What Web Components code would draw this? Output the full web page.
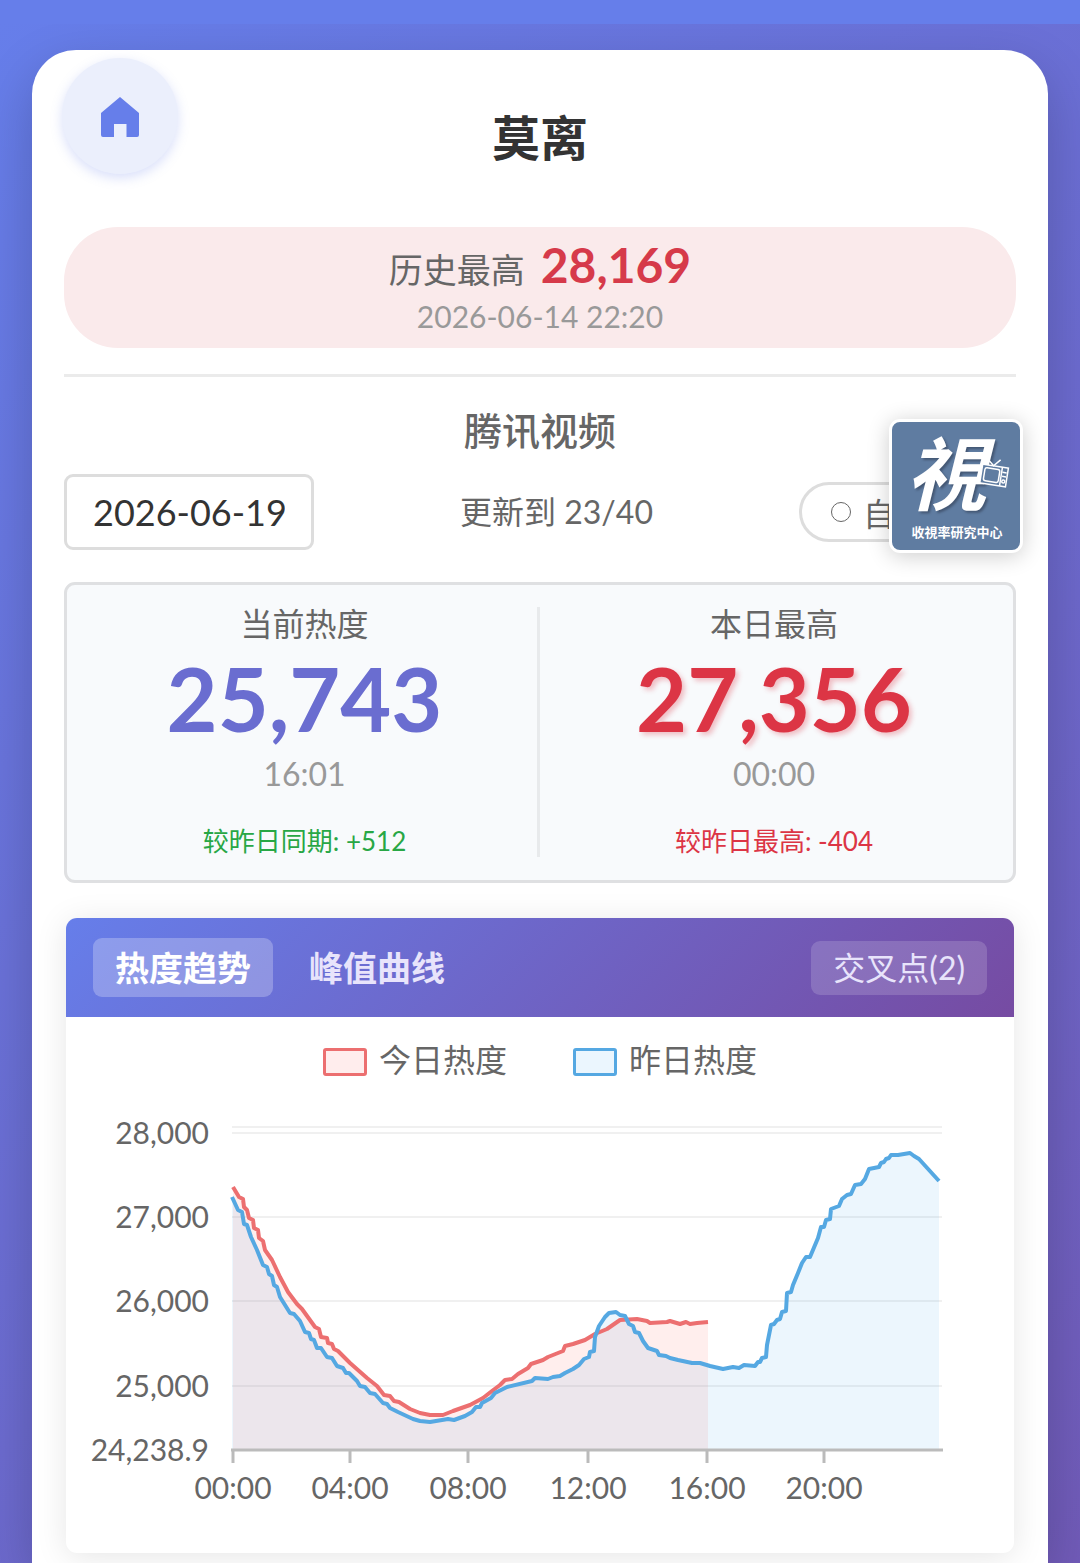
<!DOCTYPE html>
<html lang="zh-CN">
<head>
<meta charset="utf-8">
<meta name="viewport" content="width=device-width, initial-scale=1">
<title>莫离</title>
<style>
    body {
        margin: 0;
        background: #667eea;
        color: #666;
        font-family: Lato, "Noto Sans CJK SC", sans-serif;
        font-size: 32px;
    }
</style>
</head>
<body>
<heat-page>
    <page-header slot="header">莫离</page-header>
    <peak-banner label="历史最高" value="28,169" time="2026-06-14 22:20"></peak-banner>
    <show-controls platform="腾讯视频" date="2026-06-19" progress="更新到 23/40"></show-controls>
    <stat-panel>
        <stat-tile label="当前热度" value="25,743" time="16:01" tone="now">较昨日同期: +512</stat-tile>
        <stat-tile label="本日最高" value="27,356" time="00:00" tone="peak">较昨日最高: -404</stat-tile>
    </stat-panel>
    <trend-card>
        <legend-item slot="legend" color="#ec6f70" fill="#ffeded">今日热度</legend-item>
        <legend-item slot="legend" color="#55a8e2" fill="#ebf6fe">昨日热度</legend-item>
        <heat-chart></heat-chart>
    </trend-card>
</heat-page>

<script>
class HeatPage extends HTMLElement {
    constructor() {
        super();
        this.attachShadow({mode: 'open'});
        this.shadowRoot.innerHTML = `
        <style>
            :host {
                display: block;
                padding-top: 24px;
            }
            #backdrop {
                box-sizing: border-box;
                min-height: calc(100vh - 24px);
                padding: 26px 32px 0;
                display: flex;
                overflow: hidden;
                background: linear-gradient(135deg, #667eea 0%, #764ba2 100%) 0 0 / 100% 175vh;
            }
            main {
                flex: 1;
                min-width: 0;
                background: #fff;
                border-radius: 44px 44px 0 0;
                box-shadow: 0 20px 54px rgba(0,0,0,0.2);
            }
            #content {
                padding: 0 32px 10px;
            }
        </style>
        <div id="backdrop">
            <main>
                <slot name="header"></slot>
                <div id="content"><slot></slot></div>
            </main>
        </div>
        `;
    }
}

class PageHeader extends HTMLElement {
    constructor() {
        super();
        this.attachShadow({mode: 'open'});
        this.shadowRoot.innerHTML = `
        <style>
            :host {
                display: grid;
                grid-template-columns: 116px 1fr 116px;
                padding: 8px 30px 0;
                height: 169px;
            }
            button {
                width: 116px;
                height: 116px;
                padding: 0;
                border: none;
                border-radius: 50%;
                background: #ebeffc;
                color: #667eea;
                box-shadow: 0 4px 12px rgba(102,126,234,0.25);
                display: grid;
                place-items: center;
            }
            svg {
                width: 64px;
                height: 64px;
            }
            h1 {
                margin: 0;
                padding-top: 45px;
                color: #333;
                font-size: 48px;
                line-height: 70px;
                font-weight: 700;
                text-align: center;
            }
        </style>
        <button type="button" aria-label="首页">
            <svg viewBox="0 0 64 64" fill="currentColor" aria-hidden="true">
                <path d="M32 13 L51 29 V51 Q51 53 49 53 H38.500 V40 H26 V53 H15 Q13 53 13 51 V29 Z"/>
            </svg>
        </button>
        <h1><slot></slot></h1>
        `;
    }
}

class PeakBanner extends HTMLElement {
    constructor() {
        super();
        this.attachShadow({mode: 'open'});
        this.shadowRoot.innerHTML = `
        <style>
            :host {
                display: block;
                padding-bottom: 26px;
                border-bottom: 3px solid #ebebeb;
            }
            section {
                padding: 12px 32px;
                border-radius: 54px;
                background: #faeaeb;
                text-align: center;
            }
            p {
                margin: 0;
                display: flex;
                justify-content: center;
                align-items: baseline;
                gap: 16px;
                font-size: 34px;
                line-height: 52px;
            }
            strong {
                color: #d63a4a;
                font-size: 48px;
            }
            time {
                display: block;
                color: #999;
                font-size: 30px;
                line-height: 40px;
            }
        </style>
        <section>
            <p><span>${this.getAttribute('label')}</span><strong>${this.getAttribute('value')}</strong></p>
            <time>${this.getAttribute('time')}</time>
        </section>
        `;
    }
}

class ShowControls extends HTMLElement {
    constructor() {
        super();
        this.attachShadow({mode: 'open'});
        this.shadowRoot.innerHTML = `
        <style>
            :host {
                display: block;
                padding-top: 25px;
            }
            h2 {
                margin: 0;
                font-size: 38px;
                line-height: 56px;
                font-weight: 500;
                text-align: center;
            }
            #row {
                position: relative;
                margin-top: 16px;
                display: grid;
                grid-template-columns: 250px 1fr 217px;
                align-items: center;
            }
            input {
                box-sizing: border-box;
                width: 100%;
                height: 76px;
                padding: 0 26px;
                border: 3px solid #ddd;
                border-radius: 9px;
                background: #fff;
                color: #333;
                font: inherit;
                font-size: 36px;
            }
            #progress {
                text-align: center;
                line-height: 40px;
            }
            #auto {
                height: 60px;
                padding: 0 29px;
                border: 3px solid #ddd;
                border-radius: 30px;
                background: #fff;
                color: #666;
                font: inherit;
                display: flex;
                align-items: center;
                gap: 12px;
            }
            #auto i {
                box-sizing: border-box;
                width: 20px;
                height: 20px;
                border: 1px solid #666;
                border-radius: 50%;
            }
            site-badge {
                position: absolute;
                right: -7px;
                bottom: -3px;
            }
        </style>
        <h2>${this.getAttribute('platform')}</h2>
        <div id="row">
            <input type="text" aria-label="日期" value="${this.getAttribute('date')}">
            <span id="progress">${this.getAttribute('progress')}</span>
            <button type="button" id="auto"><i></i>自</button>
            <site-badge></site-badge>
        </div>
        `;
    }
}

// floating logo, sits over the end of the controls row
class SiteBadge extends HTMLElement {
    constructor() {
        super();
        this.attachShadow({mode: 'open'});
        this.shadowRoot.innerHTML = `
        <style>
            :host {
                display: block;
                border: 3px solid #fff;
                border-radius: 11px;
                background: #fff;
                box-shadow: 0 3px 22px rgba(0,0,0,0.2);
            }
            svg {
                display: block;
                width: 128px;
                height: 128px;
                border-radius: 8px;
                background: #5f7ca1;
                overflow: visible;
            }
            text {
                fill: #fff;
                font-family: Lato, "Noto Sans CJK TC", sans-serif;
                font-weight: 700;
            }
            #mark {
                font-size: 80px;
                font-style: italic;
                filter: drop-shadow(2px 2px 1px rgba(40,50,70,0.5));
            }
            #name {
                font-size: 13px;
            }
        </style>
        <svg viewBox="0 0 128 128">
            <text id="mark" x="54" y="82" text-anchor="middle">視</text>
            <g transform="rotate(9 102 54)" fill="none" stroke="#fff" stroke-width="1.500">
                <rect x="89" y="44" width="26" height="19" fill="#5f7ca1"/>
                <rect x="92" y="47" width="15" height="13" rx="2"/>
                <path d="M109 44 V63 M110 49 H114 M110 53 H114 M93 38 L100 44 L106 37"/>
                <circle cx="112" cy="58" r="1.500"/>
            </g>
            <text id="name" x="65" y="115" text-anchor="middle">收視率研究中心</text>
        </svg>
        `;
    }
}

class StatPanel extends HTMLElement {
    constructor() {
        super();
        this.attachShadow({mode: 'open'});
        this.shadowRoot.innerHTML = `
        <style>
            :host {
                display: grid;
                grid-template-columns: 1fr 1fr;
                margin-top: 32px;
                padding: 22px 5px 23px;
                border: 3px solid #dfe0e2;
                border-radius: 11px;
                background: #f8fafc;
            }
            ::slotted(stat-tile:first-child) {
                border-right: 3px solid #e8eaec;
            }
        </style>
        <slot></slot>
        `;
    }
}

class StatTile extends HTMLElement {
    constructor() {
        super();
        this.attachShadow({mode: 'open'});
        this.shadowRoot.innerHTML = `
        <style>
            :host {
                display: flex;
                flex-direction: column;
                text-align: center;
            }
            #label {
                line-height: 34px;
            }
            #value {
                color: #6a6dd0;
                font-size: 88px;
                line-height: 114px;
            }
            time {
                color: #999;
                line-height: 38px;
            }
            #diff {
                margin-top: 32px;
                color: #28a745;
                font-size: 26px;
                line-height: 32px;
            }
            :host([tone="peak"]) #value {
                color: #dc3545;
                text-shadow: 3px 3px 5px rgba(220,53,69,0.3);
            }
            :host([tone="peak"]) #diff {
                color: #dc3545;
            }
        </style>
        <span id="label">${this.getAttribute('label')}</span>
        <strong id="value">${this.getAttribute('value')}</strong>
        <time>${this.getAttribute('time')}</time>
        <span id="diff"><slot></slot></span>
        `;
    }
}

class TrendCard extends HTMLElement {
    constructor() {
        super();
        this.attachShadow({mode: 'open'});
        this.shadowRoot.innerHTML = `
        <style>
            :host {
                display: block;
                margin: 35px 2px 0;
                border-radius: 11px;
                background: #fff;
                box-shadow: 0 4px 32px rgba(0,0,0,0.1);
                overflow: hidden;
            }
            header {
                display: flex;
                align-items: center;
                gap: 14px;
                padding: 20px 27px;
                background: linear-gradient(135deg, #667eea 0%, #764ba2 100%);
            }
            button {
                border: none;
                border-radius: 9px;
                padding: 0 22px;
                background: none;
                color: #e8e4fb;
                font: inherit;
                line-height: 54px;
            }
            .tab {
                font-size: 34px;
                font-weight: 700;
                line-height: 59px;
            }
            .tab.active {
                background: rgba(255,255,255,0.25);
                color: #fff;
            }
            #cross {
                margin-left: auto;
                background: rgba(255,255,255,0.16);
            }
            #legend {
                display: flex;
                justify-content: center;
                gap: 66px;
                padding-top: 20px;
            }
        </style>
        <header>
            <button type="button" class="tab active">热度趋势</button>
            <button type="button" class="tab">峰值曲线</button>
            <button type="button" id="cross">交叉点(2)</button>
        </header>
        <div id="legend"><slot name="legend"></slot></div>
        <slot></slot>
        `;
    }
}

class LegendItem extends HTMLElement {
    constructor() {
        super();
        this.attachShadow({mode: 'open'});
        this.shadowRoot.innerHTML = `
        <style>
            :host {
                display: flex;
                align-items: center;
                gap: 12px;
                line-height: 46px;
            }
            i {
                box-sizing: border-box;
                width: 44px;
                height: 28px;
                margin-top: 4px;
                border: 3px solid ${this.getAttribute('color')};
                border-radius: 3px;
                background: ${this.getAttribute('fill')};
            }
        </style>
        <i></i><slot></slot>
        `;
    }
}

const TODAY = '233,1187 239,1197 243,1199 244,1207 247,1210 249,1218 253,1220 254,1228 258,1230 259,1238 263,1241 265,1250 272,1260 280,1277 288,1292 297,1304 302,1309 315,1327 319,1329 321,1337 327,1338 328,1343 332,1344 334,1349 338,1351 350,1363 367,1378 377,1386 384,1395 390,1396 394,1401 399,1402 410,1409 420,1413 430,1415 443,1415 453,1411 470,1405 483,1398 492,1391 500,1385 505,1380 512,1379 518,1374 528,1368 531,1364 543,1360 548,1357 563,1351 565,1346 573,1344 585,1340 595,1334 607,1329 620,1320 637,1319 647,1321 650,1323 667,1322 670,1321 680,1324 686,1322 690,1324 697,1323 708,1322';
const YESTERDAY = '232,1197 238,1210 242,1212 244,1224 247,1225 251,1237 257,1250 263,1265 267,1267 269,1274 272,1276 274,1285 277,1287 280,1297 290,1313 294,1314 300,1321 305,1332 309,1333 311,1339 314,1340 317,1348 321,1348 327,1357 332,1358 337,1366 343,1368 346,1373 349,1373 357,1381 360,1386 365,1387 370,1393 375,1394 383,1403 387,1404 390,1408 398,1412 413,1419 420,1421 430,1422 442,1420 448,1419 454,1420 465,1416 472,1412 476,1407 480,1407 482,1403 491,1398 495,1393 507,1387 532,1381 535,1378 548,1379 553,1377 560,1376 565,1373 573,1369 579,1365 584,1359 589,1357 590,1352 594,1351 595,1337 599,1326 605,1317 609,1313 616,1312 620,1315 625,1316 629,1324 633,1326 635,1332 639,1333 643,1341 648,1348 657,1351 659,1355 666,1356 670,1358 678,1360 692,1363 700,1363 710,1366 723,1369 733,1367 739,1368 744,1365 755,1366 758,1362 760,1362 762,1358 766,1357 767,1345 771,1325 774,1324 777,1320 780,1319 782,1312 786,1311 787,1293 791,1292 793,1285 798,1273 802,1263 806,1257 810,1257 818,1238 821,1227 824,1227 826,1220 830,1219 831,1209 839,1206 842,1199 847,1195 851,1194 855,1185 861,1184 865,1179 869,1169 879,1167 881,1163 884,1162 886,1159 889,1158 891,1155 898,1155 910,1153 914,1156 919,1159 929,1170 939,1181';
const BASE = 1450;

class HeatChart extends HTMLElement {
    constructor() {
        super();
        this.attachShadow({mode: 'open'});
        const rows = [['28,000', 1133], ['27,000', 1217], ['26,000', 1301], ['25,000', 1386], ['24,238.9', BASE]];
        const ticks = [['00:00', 233], ['04:00', 350], ['08:00', 468], ['12:00', 588], ['16:00', 707], ['20:00', 824]];
        this.shadowRoot.innerHTML = `
        <style>
            :host {
                display: block;
            }
            svg {
                display: block;
                width: 100%;
            }
            text {
                fill: #666;
                font-size: 30px;
            }
            .grid {
                stroke: #000;
                stroke-opacity: 0.06;
                stroke-width: 2;
            }
            .axis {
                stroke: #bbb;
                stroke-width: 3;
            }
            polyline {
                fill: none;
                stroke-width: 4;
                stroke-linejoin: round;
            }
        </style>
        <svg viewBox="66 1083 948 470" role="img" aria-label="热度趋势">
            <line class="grid" x1="232" x2="942" y1="1127" y2="1127"/>
            ${rows.slice(0, 4).map(([, y]) => `<line class="grid" x1="232" x2="942" y1="${y}" y2="${y}"/>`).join('')}
            ${this._area(TODAY, '#ff5a50')}
            ${this._area(YESTERDAY, '#46a8ee')}
            <line class="axis" x1="231" x2="943" y1="${BASE}" y2="${BASE}"/>
            ${ticks.map(([, x]) => `<line class="axis" x1="${x}" x2="${x}" y1="${BASE}" y2="1463"/>`).join('')}
            <polyline points="${TODAY}" stroke="#ec6f70"/>
            <polyline points="${YESTERDAY}" stroke="#55a8e2"/>
            ${rows.map(([label, y]) => `<text x="209" y="${y + 11}" text-anchor="end">${label}</text>`).join('')}
            ${ticks.map(([label, x]) => `<text x="${x}" y="1499" text-anchor="middle">${label}</text>`).join('')}
        </svg>
        `;
    }

    // closes a line down to the axis
    _area(points, color) {
        const list = points.split(' ');
        const first = list[0].split(',')[0];
        const last = list[list.length - 1].split(',')[0];
        return `<polygon points="${first},${BASE} ${points} ${last},${BASE}" fill="${color}" fill-opacity="0.1"/>`;
    }
}

customElements.define('site-badge', SiteBadge);
customElements.define('heat-page', HeatPage);
customElements.define('page-header', PageHeader);
customElements.define('peak-banner', PeakBanner);
customElements.define('show-controls', ShowControls);
customElements.define('stat-panel', StatPanel);
customElements.define('stat-tile', StatTile);
customElements.define('trend-card', TrendCard);
customElements.define('legend-item', LegendItem);
customElements.define('heat-chart', HeatChart);
</script>
</body>
</html>
